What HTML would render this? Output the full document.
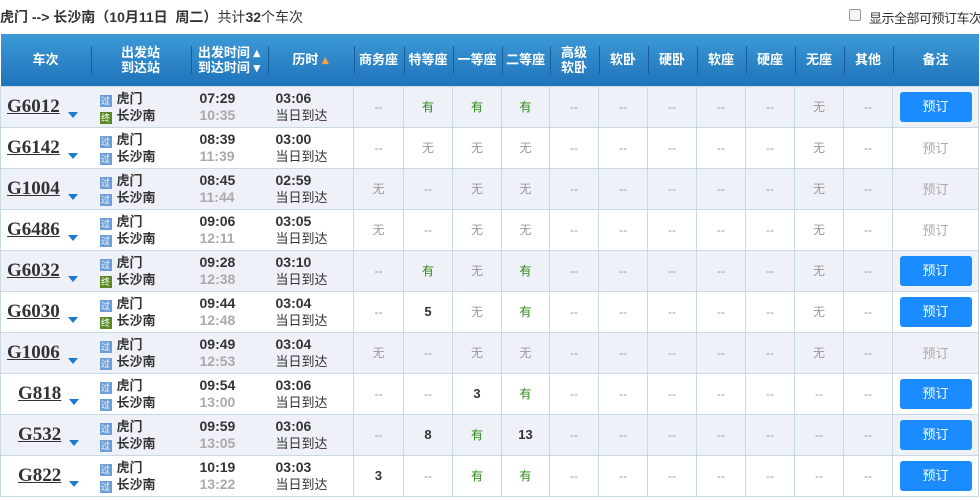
<!DOCTYPE html>
<html><head><meta charset="utf-8"><style>
*{margin:0;padding:0;box-sizing:border-box}
body{width:980px;height:500px;overflow:hidden;background:#fff;font-family:"Liberation Sans","Noto Sans CJK SC",sans-serif;font-size:12px;color:#333;position:relative}
.title{position:absolute;left:0;top:7px;font-size:14px;color:#333;white-space:nowrap}
.title b{font-weight:bold}
.chk{position:absolute;left:849px;top:9px;width:12px;height:12px;border:1px solid #999;border-radius:2px;background:#f4f4f4}
.show{position:absolute;left:869px;top:8px;font-size:13px;color:#333;white-space:nowrap;letter-spacing:-0.5px}
table{position:absolute;left:0;top:34px;border-collapse:collapse;table-layout:fixed;width:978px}
th{height:52px;color:#fff;font-weight:bold;font-size:13px;line-height:15px;background:linear-gradient(#3d9ad6,#1f73ba);position:relative;text-align:center}
th+th:before{content:"";position:absolute;left:0;top:12px;height:28px;border-left:1px solid #1a5f9c}
td{height:41px;border:1px solid #c9d9e4;text-align:center;color:#999;font-size:12px;padding:0}
tr.a td{background:#eef1f8}
td.n{text-align:left;padding-left:6px;border-right:none}
td.n a{font-family:"Liberation Serif",serif;font-weight:bold;font-size:19px;color:#333;text-decoration:underline}
td.n i{display:inline-block;width:0;height:0;border-left:5px solid transparent;border-right:5px solid transparent;border-top:6px solid #1a7ad0;margin-left:8px;vertical-align:-6px}
td.s{text-align:left;padding-left:9px;border-left:none;border-right:none;color:#333;font-weight:bold;font-size:13px;line-height:17px}
.ic{display:inline-block;width:12px;height:12px;background:#6d9ed8;color:#fff;font-size:9px;line-height:12px;text-align:center;margin-right:5px;vertical-align:-1px;font-weight:normal}
.ic.z{background:#5a8a24}
td.t{text-align:left;padding-left:9px;border-left:none;border-right:none;font-weight:bold;font-size:14px;line-height:17px;color:#333}
td.t span{color:#aaa;display:block}
td.d{text-align:left;padding-left:8px;border-left:none;font-size:13px;line-height:17px;color:#333}
td.d b{display:block;font-size:14px}
.g{color:#2b8a15}.k{color:#333;font-weight:bold;font-size:13px}
.btn{display:inline-block;width:72px;height:30px;line-height:30px;background:#1a8cff;border-radius:3px;color:#fff;font-size:13px}
.off{color:#aaa;font-size:13px}
</style></head><body>
<div class="title"><b>虎门 --&gt; 长沙南（10月11日&nbsp; 周二）</b>共计<b>32</b>个车次</div>
<div class="chk"></div><div class="show">显示全部可预订车次</div>
<table>
<colgroup><col style="width:90px"><col style="width:100px"><col style="width:77px"><col style="width:86px"><col style="width:50px"><col style="width:49px"><col style="width:49px"><col style="width:48px"><col style="width:49px"><col style="width:49px"><col style="width:49px"><col style="width:49px"><col style="width:49px"><col style="width:49px"><col style="width:49px"><col style="width:86px"></colgroup>
<tr><th>车次</th><th>出发站<br>到达站</th><th>出发时间 ▴<br>到达时间 ▾</th><th>历时 <span style="color:#f7a040">▴</span></th><th>商务座</th><th>特等座</th><th>一等座</th><th>二等座</th><th>高级<br>软卧</th><th>软卧</th><th>硬卧</th><th>软座</th><th>硬座</th><th>无座</th><th>其他</th><th>备注</th></tr>
<tr class="a"><td class="n"><a>G6012</a><i></i></td><td class="s"><span class="ic">过</span>虎门<br><span class="ic z">终</span>长沙南</td><td class="t">07:29<span>10:35</span></td><td class="d"><b>03:06</b>当日到达</td><td>--</td><td class="g">有</td><td class="g">有</td><td class="g">有</td><td>--</td><td>--</td><td>--</td><td>--</td><td>--</td><td>无</td><td>--</td><td><span class="btn">预订</span></td></tr>
<tr><td class="n"><a>G6142</a><i></i></td><td class="s"><span class="ic">过</span>虎门<br><span class="ic">过</span>长沙南</td><td class="t">08:39<span>11:39</span></td><td class="d"><b>03:00</b>当日到达</td><td>--</td><td>无</td><td>无</td><td>无</td><td>--</td><td>--</td><td>--</td><td>--</td><td>--</td><td>无</td><td>--</td><td class="off">预订</td></tr>
<tr class="a"><td class="n"><a>G1004</a><i></i></td><td class="s"><span class="ic">过</span>虎门<br><span class="ic">过</span>长沙南</td><td class="t">08:45<span>11:44</span></td><td class="d"><b>02:59</b>当日到达</td><td>无</td><td>--</td><td>无</td><td>无</td><td>--</td><td>--</td><td>--</td><td>--</td><td>--</td><td>无</td><td>--</td><td class="off">预订</td></tr>
<tr><td class="n"><a>G6486</a><i></i></td><td class="s"><span class="ic">过</span>虎门<br><span class="ic">过</span>长沙南</td><td class="t">09:06<span>12:11</span></td><td class="d"><b>03:05</b>当日到达</td><td>无</td><td>--</td><td>无</td><td>无</td><td>--</td><td>--</td><td>--</td><td>--</td><td>--</td><td>无</td><td>--</td><td class="off">预订</td></tr>
<tr class="a"><td class="n"><a>G6032</a><i></i></td><td class="s"><span class="ic">过</span>虎门<br><span class="ic z">终</span>长沙南</td><td class="t">09:28<span>12:38</span></td><td class="d"><b>03:10</b>当日到达</td><td>--</td><td class="g">有</td><td>无</td><td class="g">有</td><td>--</td><td>--</td><td>--</td><td>--</td><td>--</td><td>无</td><td>--</td><td><span class="btn">预订</span></td></tr>
<tr><td class="n"><a>G6030</a><i></i></td><td class="s"><span class="ic">过</span>虎门<br><span class="ic z">终</span>长沙南</td><td class="t">09:44<span>12:48</span></td><td class="d"><b>03:04</b>当日到达</td><td>--</td><td class="k">5</td><td>无</td><td class="g">有</td><td>--</td><td>--</td><td>--</td><td>--</td><td>--</td><td>无</td><td>--</td><td><span class="btn">预订</span></td></tr>
<tr class="a"><td class="n"><a>G1006</a><i></i></td><td class="s"><span class="ic">过</span>虎门<br><span class="ic">过</span>长沙南</td><td class="t">09:49<span>12:53</span></td><td class="d"><b>03:04</b>当日到达</td><td>无</td><td>--</td><td>无</td><td>无</td><td>--</td><td>--</td><td>--</td><td>--</td><td>--</td><td>无</td><td>--</td><td class="off">预订</td></tr>
<tr><td class="n" style="padding-left:17px"><a>G818</a><i></i></td><td class="s"><span class="ic">过</span>虎门<br><span class="ic">过</span>长沙南</td><td class="t">09:54<span>13:00</span></td><td class="d"><b>03:06</b>当日到达</td><td>--</td><td>--</td><td class="k">3</td><td class="g">有</td><td>--</td><td>--</td><td>--</td><td>--</td><td>--</td><td>--</td><td>--</td><td><span class="btn">预订</span></td></tr>
<tr class="a"><td class="n" style="padding-left:17px"><a>G532</a><i></i></td><td class="s"><span class="ic">过</span>虎门<br><span class="ic">过</span>长沙南</td><td class="t">09:59<span>13:05</span></td><td class="d"><b>03:06</b>当日到达</td><td>--</td><td class="k">8</td><td class="g">有</td><td class="k">13</td><td>--</td><td>--</td><td>--</td><td>--</td><td>--</td><td>--</td><td>--</td><td><span class="btn">预订</span></td></tr>
<tr><td class="n" style="padding-left:17px"><a>G822</a><i></i></td><td class="s"><span class="ic">过</span>虎门<br><span class="ic">过</span>长沙南</td><td class="t">10:19<span>13:22</span></td><td class="d"><b>03:03</b>当日到达</td><td class="k">3</td><td>--</td><td class="g">有</td><td class="g">有</td><td>--</td><td>--</td><td>--</td><td>--</td><td>--</td><td>--</td><td>--</td><td><span class="btn">预订</span></td></tr>
</table>
</body></html>
